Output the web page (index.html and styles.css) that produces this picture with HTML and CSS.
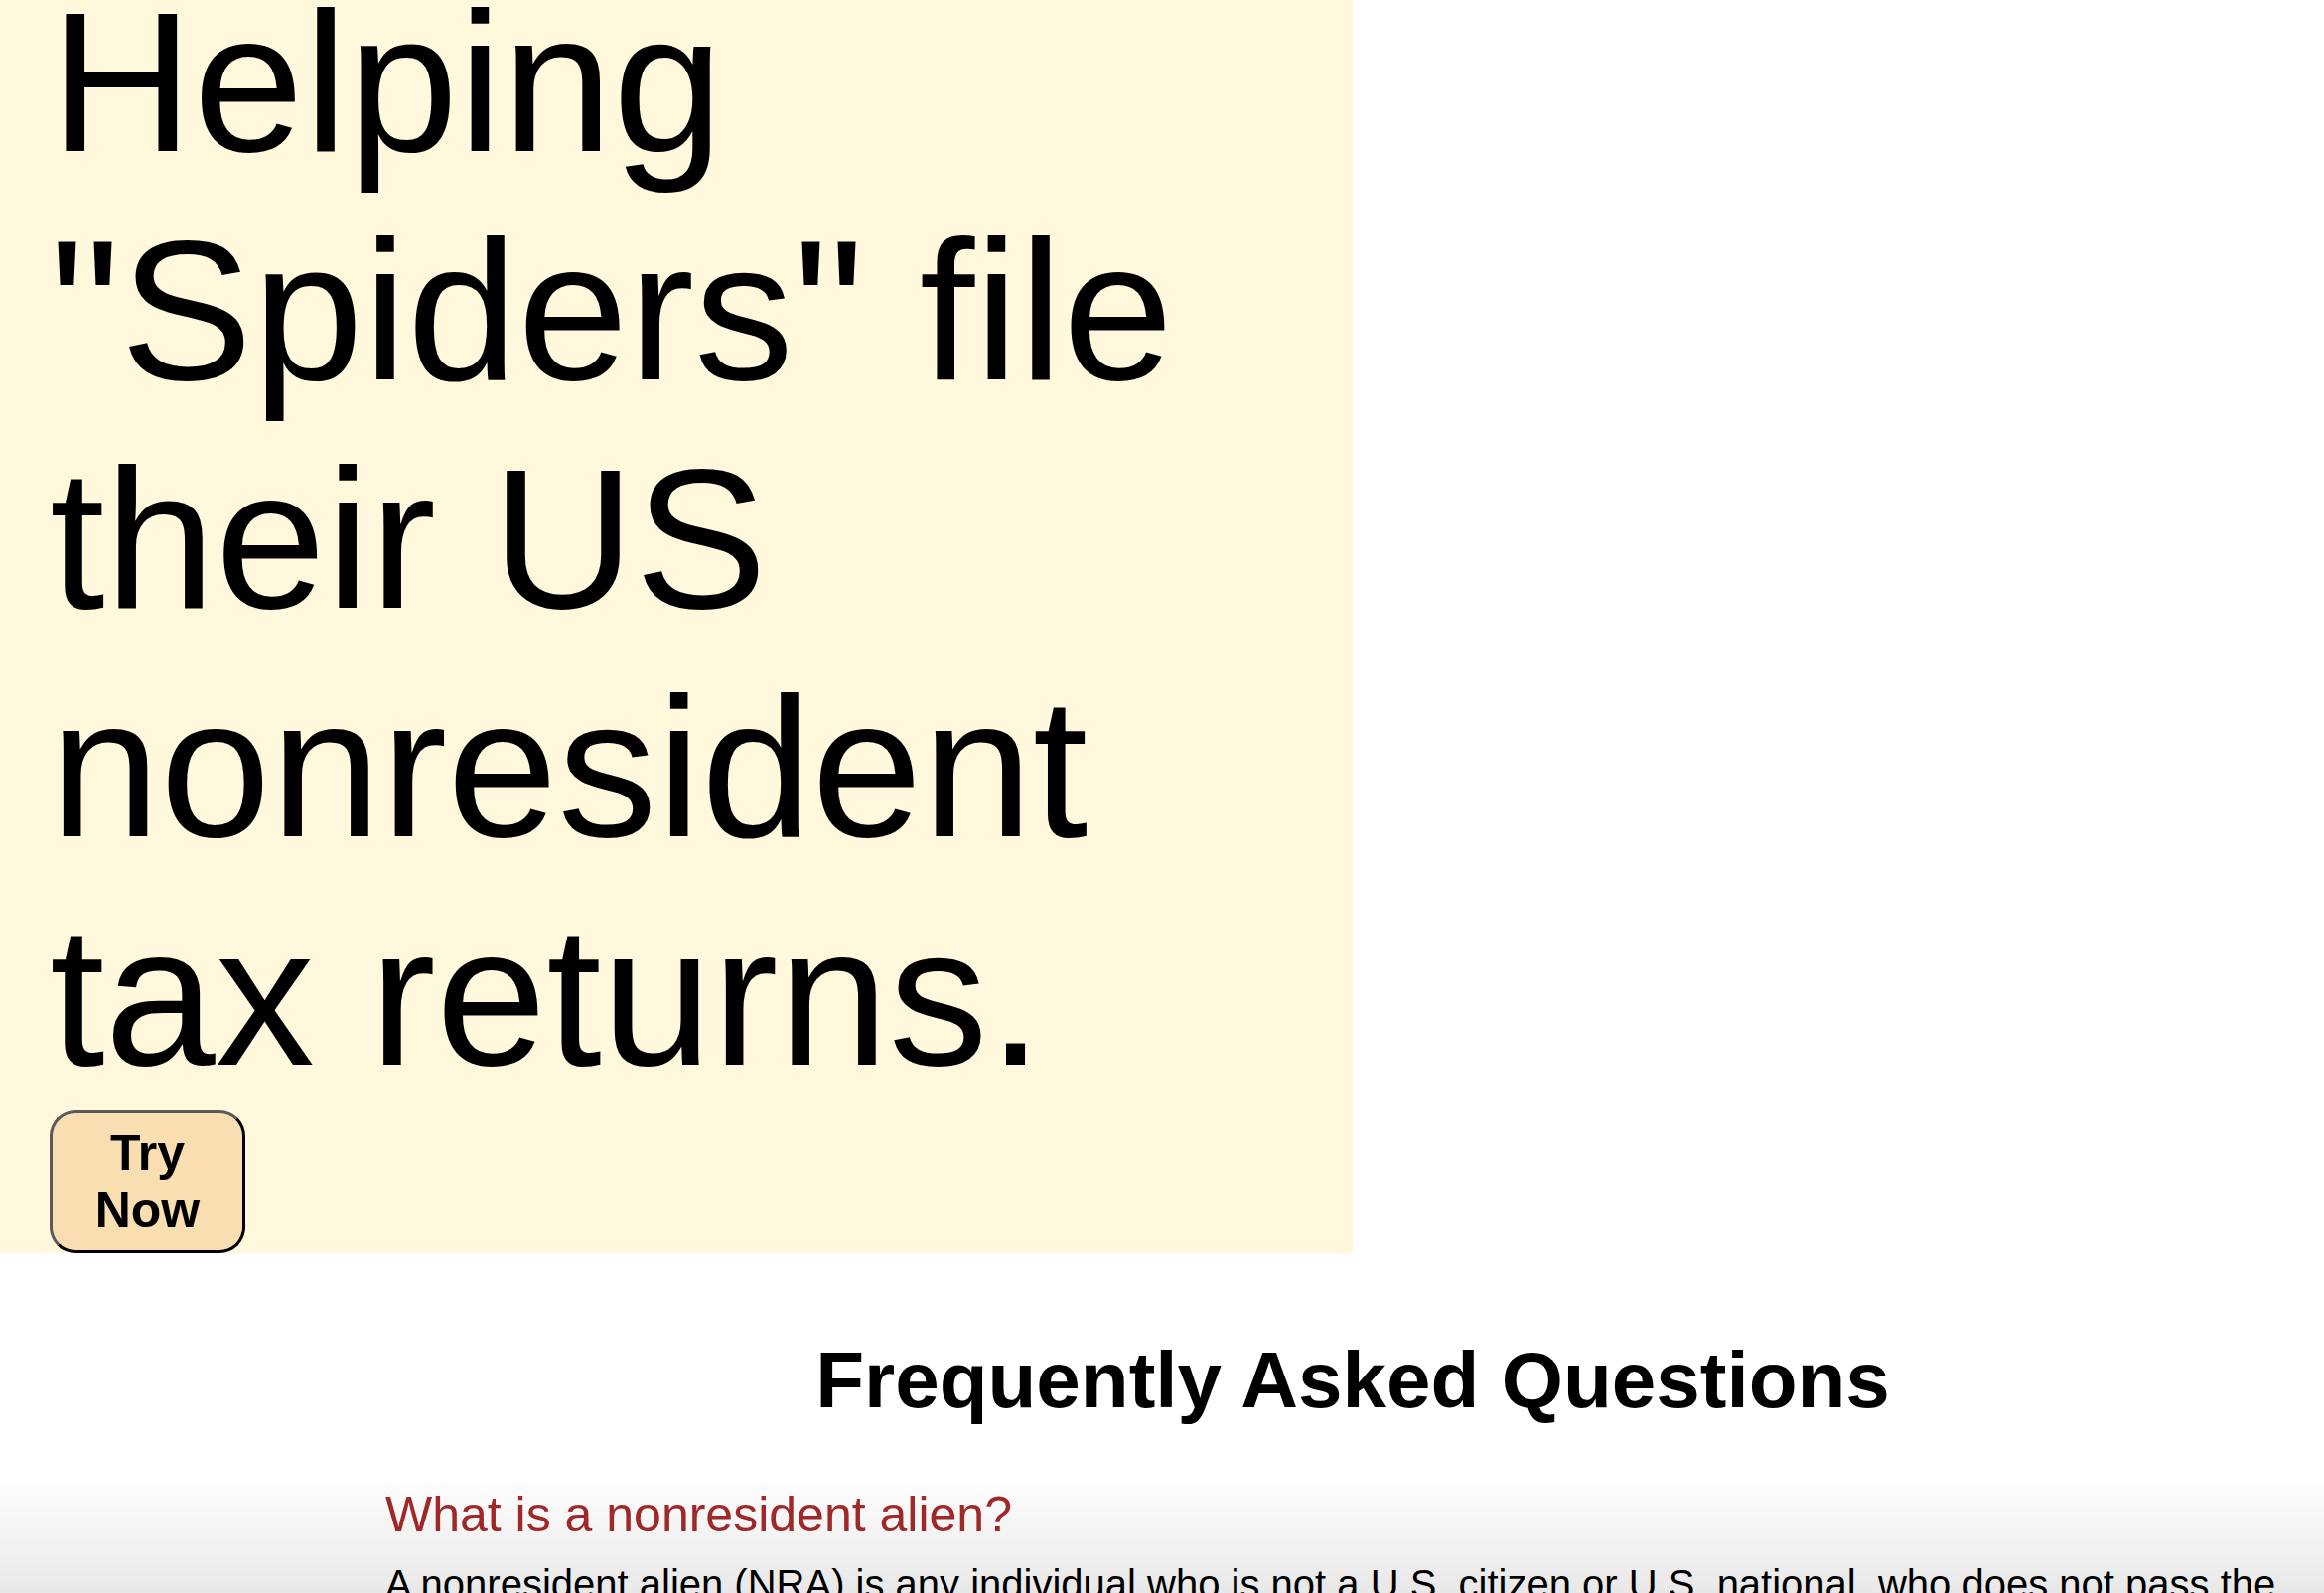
FILE: index.html
```html
<!DOCTYPE html>
<html lang="en">
<head>
<meta charset="utf-8">
<title>Spider Tax</title>
<link rel="stylesheet" href="styles.css">
</head>
<body>
  <section class="hero">
    <h1 class="hero-title">Helping "Spiders" file their US nonresident tax returns.</h1>
    <button class="try-btn" type="button">Try Now</button>
  </section>

  <section class="faq">
    <h2 class="faq-title">Frequently Asked Questions</h2>
    <div class="faq-item">
      <h3 class="faq-q">What is a nonresident alien?</h3>
      <p class="faq-a">A nonresident alien (NRA) is any individual who is not a U.S. citizen or U.S. national, who does not pass the green card test or the substantial presence test.</p>
    </div>
  </section>

  <div class="bottom-fade"></div>
</body>
</html>
```

FILE: styles.css
```css
html, body {
  margin: 0;
  padding: 0;
  background: #ffffff;
}

body {
  font-family: "Liberation Sans", Arial, Helvetica, sans-serif;
  color: #000000;
  overflow: hidden;
}

.hero {
  width: 1362px;
  box-sizing: border-box;
  padding: 0 50px;
  background: #fff8dc;
  display: flex;
  flex-direction: column;
  align-items: flex-start;
}

.hero-title {
  margin: -32px 0 0 0;
  font-size: 200px;
  font-weight: 400;
  line-height: 230px;
  width: 1200px;
}

.try-btn {
  width: 197px;
  box-sizing: border-box;
  padding: 12px 20px;
  border: 3px solid;
  border-color: #5a5a5a #000000 #000000 #5a5a5a;
  border-radius: 26px;
  background: #f8deb1;
  font-family: "Liberation Sans", Arial, Helvetica, sans-serif;
  font-weight: 700;
  font-size: 50px;
  line-height: 57px;
  color: #000000;
  text-align: center;
  cursor: pointer;
}

.faq {
  padding: 0 4px 0 388px;
}

.faq-title {
  margin: 82px 0 0 0;
  font-size: 80px;
  font-weight: 700;
  line-height: 92px;
  text-align: center;
}

.faq-q {
  margin: 61px 0 0 0;
  font-size: 50px;
  font-weight: 400;
  line-height: 57px;
  color: #a52a2a;
}

.faq-a {
  margin: 13px 0 0 0;
  font-size: 40px;
  line-height: 56px;
}

.bottom-fade {
  position: fixed;
  left: 0;
  right: 0;
  bottom: 0;
  height: 120px;
  pointer-events: none;
  background: linear-gradient(to bottom, rgba(0, 0, 0, 0), rgba(0, 0, 0, 0.09));
}
```
